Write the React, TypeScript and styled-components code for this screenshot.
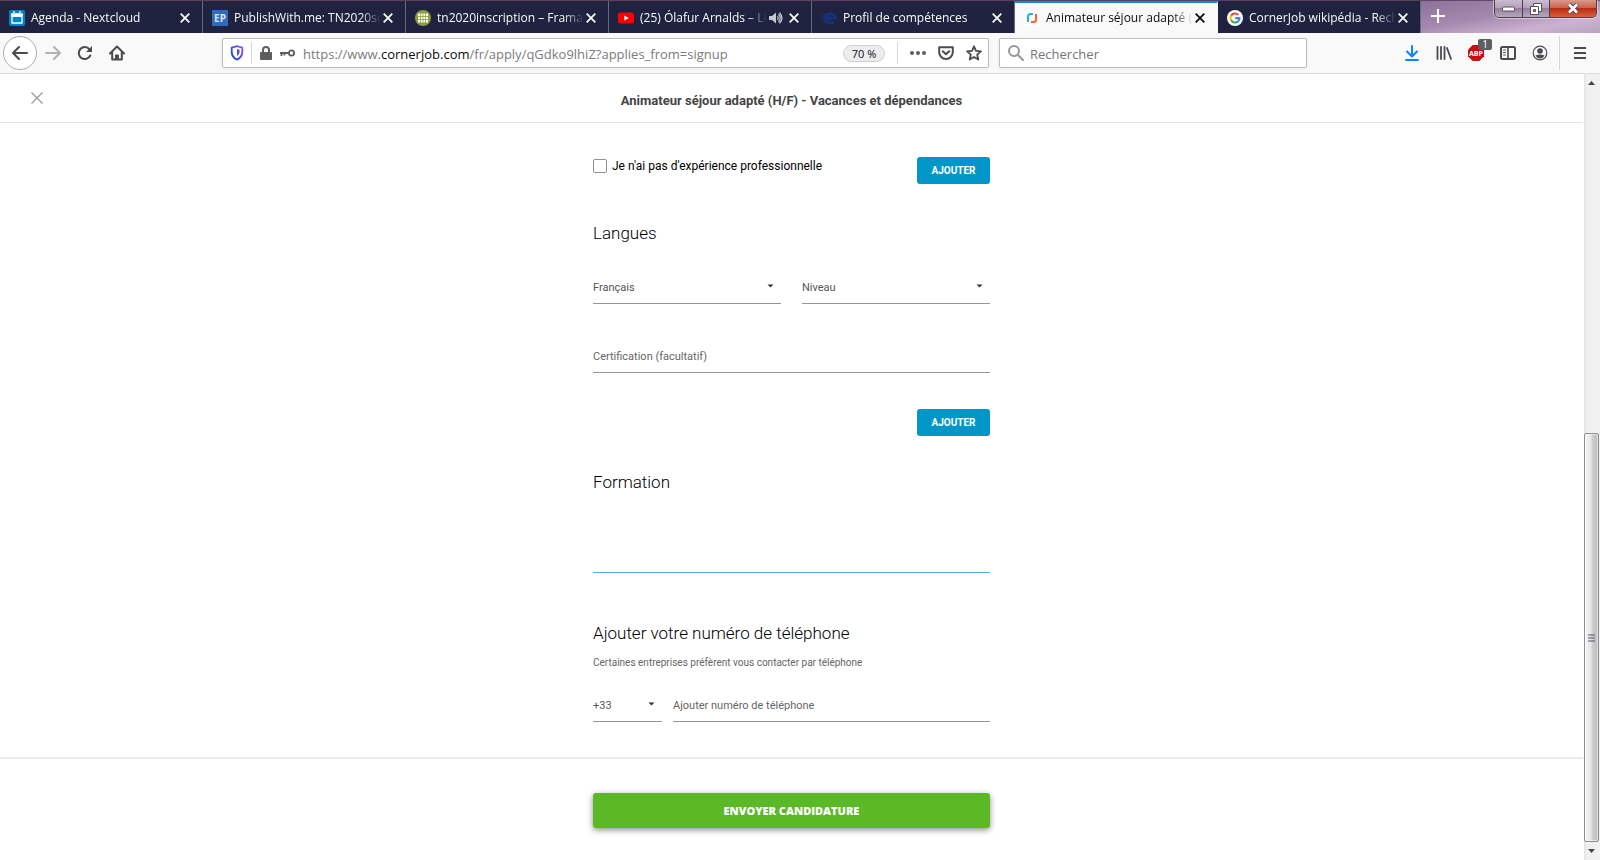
import React from 'react';
import styled, { createGlobalStyle, css } from 'styled-components';

const uiFont = '"Open Sans", "Noto Sans", sans-serif';
const pageFont = 'Roboto, "Liberation Sans", sans-serif';

const GlobalStyle = createGlobalStyle`
  *, *::before, *::after { box-sizing: border-box; }
  body { margin: 0; background: #fff; font-family: ${pageFont}; color: #000; }
  button, input, select { font: inherit; color: inherit; border: 0; margin: 0; padding: 0; background: none; border-radius: 0; }
  button { cursor: pointer; }
  h1, h2, p { margin: 0; }
  svg { display: block; flex: none; }
`;

const Window = styled.div`
  min-height: 100vh;
  display: flex;
  flex-direction: column;
`;

/* ---------- tab strip ---------- */

const TabStrip = styled.div`
  display: flex;
  height: 33px;
  padding-top: 1px;
  font: 12px/16px ${uiFont};
  background: linear-gradient(180deg, rgba(60, 35, 60, 0.55) 0, rgba(60, 35, 60, 0.55) 1px, transparent 1px),
    linear-gradient(170deg, #8d7098 0%, #a58aae 45%, #cbb3d0 75%, #b9a3bf 100%);
  background-size: 100% 100%, 179px 100%;
  background-position: 0 0, right top;
  background-repeat: no-repeat;
  background-color: #80647f;
`;

const Tab = styled.div<{ $active?: boolean }>`
  flex: 0 1 203px;
  min-width: 0;
  display: flex;
  align-items: center;
  gap: 6px;
  padding: 2px 12px 0 9px;
  border-right: 1px solid #68687e;
  background: #202340;
  color: #f9f9fa;
  ${p =>
    p.$active &&
    css`
      padding-top: 0;
      border-top: 2px solid #0a84ff;
      border-right-color: #f9f9fa;
      background: #f9f9fa;
      color: #0c0c0d;
    `}
`;

const TabLabel = styled.span`
  flex: 1;
  min-width: 0;
  margin-right: -4px;
  overflow: hidden;
  white-space: nowrap;
  mask-image: linear-gradient(to left, transparent 0, #000 20px);
`;

const TabClose = styled.button`
  display: flex;
  flex: none;
`;

const NewTab = styled.button`
  display: flex;
  padding: 8px 10px;
  color: #fff;
`;

const WindowControls = styled.div`
  display: flex;
  align-self: flex-start;
  height: 18px;
  margin: -1px 3px 0 auto;
  border: 1px solid #4b3e50;
  border-top: 0;
  border-radius: 0 0 5px 5px;
  overflow: hidden;
  box-shadow: 0 0 0 1px rgba(255, 255, 255, 0.45);
`;

const ControlButton = styled.button<{ $close?: boolean }>`
  width: ${p => (p.$close ? 47 : 27)}px;
  display: flex;
  align-items: center;
  justify-content: center;
  background: ${p =>
    p.$close
      ? 'linear-gradient(180deg, #d99a8b 0, #c9644f 45%, #bb2c12 50%, #d5613f 100%)'
      : 'linear-gradient(180deg, #cbbccf 0, #b5a2ba 45%, #957f9c 50%, #b9a7be 100%)'};
  & + & {
    border-left: 1px solid #4b3e50;
  }
`;

/* ---------- navigation toolbar ---------- */

const Toolbar = styled.div`
  height: 41px;
  display: flex;
  align-items: center;
  background: #f9f9fa;
  border-bottom: 1px solid #dcdcdd;
  color: #4a4a4f;
`;

const NavButtons = styled.div`
  display: flex;
  align-items: center;
  padding-left: 3px;
`;

const ToolButton = styled.button<{ $dim?: boolean }>`
  position: relative;
  width: 32px;
  height: 34px;
  display: flex;
  align-items: center;
  justify-content: center;
  opacity: ${p => (p.$dim ? 0.4 : 1)};
`;

const BackButton = styled(ToolButton)`
  width: 34px;
  border: 1px solid #adadb0;
  border-radius: 50%;
  background: #fff;
`;

const MenuButton = styled(ToolButton)`
  width: 40px;
`;

const Spacer = styled.div`
  flex: 89 1 0;
`;

const fieldBox = css`
  min-width: 0;
  height: 30px;
  display: flex;
  align-items: center;
  background: #fff;
  border: 1px solid #bcbcbe;
  border-radius: 2px;
  box-shadow: 0 1px 4px rgba(0, 0, 0, 0.06);
  font: 13px/18px ${uiFont};
`;

const AddressBar = styled.div`
  ${fieldBox}
  flex: 765 1 0;
  margin-right: 10px;
`;

const BoxButton = styled.button`
  width: 28px;
  height: 28px;
  display: flex;
  flex: none;
  align-items: center;
  justify-content: center;
`;

const Separator = styled.span`
  width: 1px;
  height: 22px;
  background: #d7d7db;
`;

const MenuSeparator = styled(Separator)`
  height: 34px;
  margin-left: 3px;
`;

const Address = styled.div`
  flex: 1;
  min-width: 0;
  overflow: hidden;
  white-space: nowrap;
  margin-left: 8px;
  padding-top: 2px;
  color: #7b7b7e;
  outline: 0;
  b {
    color: #0c0c0d;
    font-weight: 400;
  }
`;

const Zoom = styled.button`
  width: 42px;
  height: 17px;
  margin-right: 12px;
  border: 1px solid #cfcfd2;
  border-radius: 9px;
  background: #ededf0;
  color: #0c0c0d;
  font-size: 11px;
  line-height: 15px;
`;

const PageActions = styled.div`
  display: flex;
  padding-left: 6px;
`;

const SearchBox = styled.label`
  ${fieldBox}
  flex: 298 1 0;
  padding-left: 8px;
  gap: 6px;
  color: #97979a;
  input {
    flex: 1;
    min-width: 0;
    outline: 0;
    padding-top: 2px;
  }
  input::placeholder {
    color: #757578;
    opacity: 1;
  }
`;

const ToolGroup = styled.div`
  display: flex;
  align-items: center;
`;

const Badge = styled.span`
  position: absolute;
  top: 3px;
  right: 0;
  width: 14px;
  height: 11px;
  border-radius: 2px;
  background: #5e5e61;
  color: #fff;
  font: 10px/11px ${uiFont};
`;

/* ---------- page ---------- */

const Viewport = styled.div`
  flex: 1;
  display: flex;
`;

const Page = styled.div`
  flex: 1;
  min-width: 0;
`;

const PageHeader = styled.header`
  height: 49px;
  display: grid;
  grid-template-columns: 1fr auto 1fr;
  align-items: center;
  padding: 0 31px;
  border-bottom: 1px solid #e4e4e4;
`;

const Title = styled.h1`
  padding-top: 5px;
  font-size: 13px;
  line-height: 16px;
  font-weight: 700;
  color: #444;
`;

const CloseButton = styled.button`
  display: flex;
  justify-self: start;
`;

const Column = styled.div`
  width: 100%;
  max-width: 397px;
  margin: 0 auto;
`;

const FormBody = styled(Column)`
  padding: 34px 0 35px;
`;

const ActionRow = styled.div<{ $top?: number }>`
  display: flex;
  justify-content: flex-end;
  margin-top: ${p => p.$top ?? 0}px;
`;

const CheckLabel = styled.label`
  display: flex;
  align-items: center;
  gap: 5px;
  height: 18px;
  margin-right: auto;
  font-size: 12px;
  line-height: 18px;
`;

const CheckBox = styled.input`
  appearance: none;
  width: 14px;
  height: 14px;
  border: 1px solid #8f8f93;
  border-radius: 2px;
  background: #fff;
`;

const AddButton = styled.button`
  width: 73px;
  height: 27px;
  border-radius: 3px;
  background: #0097c8;
  color: #fff;
  font-size: 10px;
  font-weight: 700;
`;

const Heading = styled.h2<{ $top: number }>`
  margin-top: ${p => p.$top}px;
  font-size: 17px;
  line-height: 20px;
  font-weight: 300;
`;

const Hint = styled.p`
  margin-top: 13px;
  font-size: 10px;
  line-height: 14px;
  color: #666;
`;

const FieldRow = styled.div<{ $cols: string; $gap?: number; $top: number }>`
  display: grid;
  grid-template-columns: ${p => p.$cols};
  column-gap: ${p => p.$gap ?? 0}px;
  margin-top: ${p => p.$top}px;
`;

const lineField = css`
  width: 100%;
  height: 28px;
  padding-bottom: 5px;
  border-bottom: 1px solid #949494;
  outline: 0;
  font-size: 11px;
  color: #555;
`;

const TextField = styled.input<{ $focused?: boolean }>`
  ${lineField}
  padding-bottom: 4px;
  ${p => p.$focused && 'border-bottom-color: #5fa8e0;'}
  &::placeholder {
    color: #666;
    opacity: 1;
  }
`;

const SelectField = styled.select`
  ${lineField}
  appearance: none;
`;

const SelectWrap = styled.div`
  display: grid;
  align-items: center;
  & > * {
    grid-area: 1 / 1;
  }
  svg {
    justify-self: end;
    margin: 0 7px 8px 0;
    pointer-events: none;
  }
`;

const Submit = styled.footer`
  padding: 34px 0 32px;
  border-top: 2px solid #ebebeb;
`;

const SubmitButton = styled.button`
  width: 100%;
  height: 35px;
  border-radius: 3px;
  background: #5cb926;
  color: #fff;
  font: 800 11px/16px ${uiFont};
  box-shadow: 0 2px 6px rgba(0, 0, 0, 0.45);
`;

/* ---------- scroll bar ---------- */

const ScrollBar = styled.div`
  width: 17px;
  display: flex;
  flex-direction: column;
  padding-right: 1px;
  background: linear-gradient(90deg, #fff 1px, #e3e3e3 1px, #f0f0f0 4px, #f1f1f1);
`;

const ScrollArrow = styled.button`
  height: 18px;
  display: flex;
  align-items: center;
  justify-content: center;
`;

const ScrollTrack = styled.div`
  flex: 342 1 0;
`;

const ScrollThumb = styled.div`
  flex: 408 1 0;
  display: flex;
  align-items: center;
  justify-content: center;
  margin-left: 1px;
  border: 1px solid #8e8e90;
  border-radius: 2px;
  background: linear-gradient(90deg, #f5f5f5 0, #e6e6e7 45%, #cfcfd2 55%, #bcbcc0 100%);
  box-shadow: inset 0 0 0 1px rgba(255, 255, 255, 0.5);
`;

/* ---------- icons ---------- */

const Cross = () => (
  <svg width="10" height="10" viewBox="0 0 10 10" fill="none" stroke="currentColor" strokeWidth="1.800">
    <path d="M.7.7l8.600 8.600M9.300.7L.7 9.300" />
  </svg>
);

const Icon = ({ children }: { children: React.ReactNode }) => (
  <svg width="16" height="16" viewBox="0 0 16 16" fill="none" stroke="currentColor" strokeWidth="2" strokeLinecap="round" strokeLinejoin="round">
    {children}
  </svg>
);

const Caret = () => (
  <svg width="7" height="4" viewBox="0 0 7 4">
    <path d="M.5.5h6L3.500 3.500z" fill="#333" />
  </svg>
);

const CalendarIcon = () => (
  <Icon>
    <rect width="16" height="16" rx="2" fill="#0082c9" stroke="none" />
    <path d="M3 4h10v9H3z" fill="none" stroke="#fff" strokeWidth="1.300" />
    <path d="M3 4h10v2.500H3z" fill="#fff" stroke="#fff" strokeWidth="1" />
    <path d="M5 2v2.500M11 2v2.500" stroke="#fff" strokeWidth="2" />
    <path d="M5 1.800v2M11 1.800v2" stroke="#0082c9" strokeWidth=".6" />
  </Icon>
);

const EtherpadIcon = () => (
  <svg width="16" height="16" viewBox="0 0 16 16">
    <rect width="16" height="16" fill="#3069bd" />
    <text x="8" y="12" textAnchor="middle" fontFamily="Open Sans" fontWeight="700" fontSize="10" fill="#dbe7f8">EP</text>
  </svg>
);

const CalcIcon = () => (
  <Icon>
    <circle cx="8" cy="8" r="8" fill="#8e9c3c" stroke="none" />
    <path d="M3 3.500h10v9H3z" fill="#fff" stroke="none" />
    <path d="M3 6.500h10M3 9.500h10M5.500 3.500v9M8 3.500v9M10.500 3.500v9" stroke="#8e9c3c" strokeWidth=".8" />
  </Icon>
);

const YoutubeIcon = () => (
  <Icon>
    <rect x="0" y="2.500" width="16" height="11" rx="2.500" fill="#f00" stroke="none" />
    <path d="M6.300 5.500v5L10.800 8z" fill="#fff" stroke="none" />
  </Icon>
);

const SpeakerIcon = () => (
  <svg width="14" height="12" viewBox="0 0 14 12" fill="none" stroke="#c9c9d2" strokeWidth="1.200">
    <path d="M0 4h3l4-3.500v11L3 8H0z" fill="#c9c9d2" stroke="none" />
    <path d="M8.500 4q1.500 2 0 4M9.500 2q3.500 4 0 8M10.500.6q5 5.400 0 10.800" />
  </svg>
);

const EuropassIcon = () => (
  <Icon>
    <circle cx="5.500" cy="8" r="5.500" fill="#1d2a5c" stroke="none" />
    <path d="M5.800 8.300h8.700A4.700 4.700 0 1 0 13 11.800" stroke="#1b2f80" strokeWidth="2.400" strokeLinecap="butt" />
  </Icon>
);

const CornerJobIcon = () => (
  <Icon>
    <rect width="16" height="16" fill="#fff" stroke="none" />
    <path d="M4 12V6.500Q4 4 6.500 4H9" stroke="#21b3d6" strokeLinecap="butt" />
    <path d="M12 4v5.500Q12 12 9.500 12H7" stroke="#f8602c" strokeLinecap="butt" />
  </Icon>
);

const GoogleIcon = () => (
  <svg width="16" height="16" viewBox="0 0 16 16" fill="none" strokeWidth="2.100">
    <circle cx="8" cy="8" r="8" fill="#fff" />
    <path d="M11.300 4.900A4.500 4.500 0 0 0 4.100 5.800" stroke="#ea4335" />
    <path d="M4.100 5.800a4.500 4.500 0 0 0 0 4.500" stroke="#fbbc05" />
    <path d="M4.100 10.300a4.500 4.500 0 0 0 6.900 1.100" stroke="#34a853" />
    <path d="M11 11.400A4.500 4.500 0 0 0 12.500 8.100H8.200" stroke="#4285f4" />
  </svg>
);

const tabs: { label: string; icon: React.ReactNode; active?: boolean; sound?: boolean }[] = [
  { label: 'Agenda - Nextcloud', icon: <CalendarIcon /> },
  { label: 'PublishWith.me: TN2020so', icon: <EtherpadIcon /> },
  { label: 'tn2020inscription – Framac', icon: <CalcIcon /> },
  { label: '(25) Ólafur Arnalds – Liv', icon: <YoutubeIcon />, sound: true },
  { label: 'Profil de compétences', icon: <EuropassIcon /> },
  { label: 'Animateur séjour adapté (H', icon: <CornerJobIcon />, active: true },
  { label: 'CornerJob wikipédia - Rech', icon: <GoogleIcon /> },
];

function Tabs() {
  return (
    <TabStrip>
      {tabs.map(t => (
        <Tab key={t.label} $active={t.active}>
          {t.icon}
          <TabLabel>{t.label}</TabLabel>
          {t.sound && <SpeakerIcon />}
          <TabClose aria-label="Fermer l'onglet"><Cross /></TabClose>
        </Tab>
      ))}
      <NewTab aria-label="Nouvel onglet">
        <svg width="14" height="14" viewBox="0 0 14 14" stroke="currentColor" strokeWidth="2"><path d="M7 0v14M0 7h14" /></svg>
      </NewTab>
      <WindowControls>
        <ControlButton aria-label="Réduire">
          <svg width="13" height="6" viewBox="0 0 13 6"><rect x=".5" y="1" width="12" height="4" rx="1" fill="#fff" stroke="#55505c" /></svg>
        </ControlButton>
        <ControlButton aria-label="Restaurer">
          <svg width="13" height="12" viewBox="0 0 13 12" fill="#fff" stroke="#55505c">
            <path d="M3.500.5h8v8h-8z" />
            <path d="M.5 3.500h8v8h-8z" />
            <path d="M3.500 6.500h2v2h-2z" fill="#9a86a1" />
          </svg>
        </ControlButton>
        <ControlButton $close aria-label="Fermer">
          <svg width="12" height="11" viewBox="0 0 12 11" fill="none">
            <path d="M2 1.500l8 8M10 1.500l-8 8" stroke="#4d4652" strokeWidth="4.500" />
            <path d="M2 1.500l8 8M10 1.500l-8 8" stroke="#fff" strokeWidth="2.600" />
          </svg>
        </ControlButton>
      </WindowControls>
    </TabStrip>
  );
}

function NavBar() {
  return (
    <Toolbar>
      <NavButtons>
        <BackButton aria-label="Précédent"><Icon><path d="M15 8H1.500M7 2L1 8l6 6" /></Icon></BackButton>
        <ToolButton $dim aria-label="Suivant"><Icon><path d="M1 8h13.500M9 2l6 6-6 6" /></Icon></ToolButton>
        <ToolButton aria-label="Actualiser">
          <Icon><path d="M13.300 10.500A6 6 0 1 1 12.500 4.300" /><path d="M15 1v6H9z" fill="currentColor" stroke="none" /></Icon>
        </ToolButton>
        <ToolButton aria-label="Accueil">
          <Icon><path d="M1 8.500L8 1.500l7 7M3.200 7.500V14.500h9.600V7.500" /><path d="M6.500 14v-4h3v4z" fill="currentColor" stroke="currentColor" strokeWidth="1" /></Icon>
        </ToolButton>
      </NavButtons>
      <Spacer />
      <AddressBar>
        <BoxButton aria-label="Protection">
          <svg width="14" height="16" viewBox="0 0 14 16" fill="none">
            <defs><linearGradient id="shield" x1="1" y1="0" x2="0" y2="1"><stop stopColor="#9059ff" /><stop offset="1" stopColor="#0250bb" /></linearGradient></defs>
            <path d="M7 1.200l5.300 1.500v4Q12.300 12 7 14.600 1.700 12 1.700 6.700v-4z" stroke="url(#shield)" strokeWidth="1.900" strokeLinejoin="round" />
            <path d="M7 4l2.500.8v2.500Q9.300 9.600 7 11.200z" fill="#5b4be8" />
          </svg>
        </BoxButton>
        <Separator />
        <BoxButton aria-label="Connexion sécurisée">
          <svg width="12" height="14" viewBox="0 0 12 14" fill="none" stroke="#5e5e61" strokeWidth="2">
            <path d="M3 7V4a3 3 0 0 1 6 0v3" /><rect y="6" width="12" height="8" rx="1" fill="#5e5e61" stroke="none" />
          </svg>
        </BoxButton>
        <svg width="15" height="8" viewBox="0 0 15 8" fill="none" stroke="#5e5e61" strokeWidth="1.800">
          <circle cx="11.500" cy="4" r="2.600" /><path d="M9 4H0M1.500 4v3M4.500 4v2.500" />
        </svg>
        <Address role="textbox" aria-label="Adresse" contentEditable suppressContentEditableWarning spellCheck={false}>
          https://www.<b>cornerjob.com</b>/fr/apply/qGdko9lhiZ?applies_from=signup
        </Address>
        <Zoom>70 %</Zoom>
        <Separator />
        <PageActions>
          <BoxButton aria-label="Actions">
            <svg width="16" height="4" viewBox="0 0 16 4" fill="#5e5e61"><circle cx="2" cy="2" r="2" /><circle cx="8" cy="2" r="2" /><circle cx="14" cy="2" r="2" /></svg>
          </BoxButton>
          <BoxButton aria-label="Pocket"><Icon><path d="M1.200 2.200h13.600v5a6.800 6.800 0 0 1-13.600 0zM4.800 6.200L8 9.200l3.200-3" /></Icon></BoxButton>
          <BoxButton aria-label="Marque-page"><Icon><path d="M8 1.300l2 4.500 4.900.5-3.700 3.300 1.100 4.900L8 12l-4.300 2.500 1.100-4.900L1.100 6.300 6 5.800z" strokeWidth="1.800" /></Icon></BoxButton>
        </PageActions>
      </AddressBar>
      <SearchBox>
        <Icon><circle cx="6" cy="6" r="5" /><path d="M10 10l5 5" /></Icon>
        <input aria-label="Rechercher" placeholder="Rechercher" />
      </SearchBox>
      <Spacer />
      <ToolGroup>
        <ToolButton aria-label="Téléchargements">
          <svg width="14" height="16" viewBox="0 0 14 16" fill="none" stroke="#0a84ff" strokeWidth="2" strokeLinecap="round" strokeLinejoin="round"><path d="M7 1v10M2 6.500l5 5 5-5M1 15h12" /></svg>
        </ToolButton>
        <ToolButton aria-label="Bibliothèque"><Icon><path d="M1.500 2v12M5 2v12M8.500 2v12M11 3l4 11" strokeWidth="1.800" /></Icon></ToolButton>
        <ToolButton aria-label="Adblock Plus">
          <svg width="16" height="16" viewBox="0 0 16 16">
            <path d="M4.700 0h6.600L16 4.700v6.600L11.300 16H4.700L0 11.300V4.700z" fill="#c70d0d" />
            <text x="8" y="11" textAnchor="middle" fontFamily="Open Sans" fontWeight="700" fontSize="7" fill="#fff">ABP</text>
          </svg>
          <Badge>1</Badge>
        </ToolButton>
        <ToolButton aria-label="Barres latérales">
          <Icon><rect x="1" y="2" width="14" height="12" rx="1.500" /><path d="M8 2v12" strokeWidth="1.600" /><path d="M3.500 5h2M3.500 7.500h2M3.500 10h2" strokeWidth="1" /></Icon>
        </ToolButton>
        <ToolButton aria-label="Compte">
          <Icon><circle cx="8" cy="8" r="6.800" strokeWidth="1.200" /><circle cx="8" cy="6" r="2.800" fill="currentColor" stroke="none" /><path d="M3.500 10.500q4.500-2 9 0Q11 13.500 8 13.500t-4.500-3z" fill="currentColor" stroke="none" /></Icon>
        </ToolButton>
        <MenuSeparator />
        <MenuButton aria-label="Menu">
          <svg width="12" height="12" viewBox="0 0 12 12" stroke="currentColor" strokeWidth="2"><path d="M0 1h12M0 6h12M0 11h12" /></svg>
        </MenuButton>
      </ToolGroup>
    </Toolbar>
  );
}

function Select({ label, options }: { label: string; options: string[] }) {
  return (
    <SelectWrap>
      <SelectField aria-label={label}>{options.map(o => <option key={o}>{o}</option>)}</SelectField>
      <Caret />
    </SelectWrap>
  );
}

function ApplicationForm() {
  return (
    <form>
      <FormBody>
        <ActionRow>
          <CheckLabel><CheckBox type="checkbox" />Je n'ai pas d'expérience professionnelle</CheckLabel>
          <AddButton type="button">AJOUTER</AddButton>
        </ActionRow>

        <Heading $top={39}>Langues</Heading>
        <FieldRow $cols="1fr 1fr" $gap={21} $top={33}>
          <Select label="Langue" options={['Français']} />
          <Select label="Niveau" options={['Niveau']} />
        </FieldRow>
        <FieldRow $cols="1fr" $top={41}>
          <TextField aria-label="Certification" placeholder="Certification (facultatif)" />
        </FieldRow>
        <ActionRow $top={36}><AddButton type="button">AJOUTER</AddButton></ActionRow>

        <Heading $top={36}>Formation</Heading>
        <FieldRow $cols="1fr" $top={53}>
          <TextField $focused aria-label="Formation" />
        </FieldRow>

        <Heading $top={50}>Ajouter votre numéro de téléphone</Heading>
        <Hint>Certaines entreprises préfèrent vous contacter par téléphone</Hint>
        <FieldRow $cols="69px 1fr" $gap={11} $top={24}>
          <Select label="Indicatif" options={['+33']} />
          <TextField type="tel" aria-label="Numéro de téléphone" placeholder="Ajouter numéro de téléphone" />
        </FieldRow>
      </FormBody>
      <Submit>
        <Column><SubmitButton type="submit">ENVOYER CANDIDATURE</SubmitButton></Column>
      </Submit>
    </form>
  );
}

export default function App() {
  return (
    <Window>
      <GlobalStyle />
      <Tabs />
      <NavBar />
      <Viewport>
        <Page>
          <PageHeader>
            <CloseButton aria-label="Fermer"><svg width="12" height="12" viewBox="0 0 12 12" stroke="#999" strokeWidth="1.300"><path d="M.5.5l11 11M11.500.5l-11 11" /></svg></CloseButton>
            <Title>Animateur séjour adapté (H/F) - Vacances et dépendances</Title>
          </PageHeader>
          <ApplicationForm />
        </Page>
        <ScrollBar>
          <ScrollArrow aria-label="Défiler vers le haut"><svg width="7" height="4" viewBox="0 0 7 4"><path d="M0 4l3.500-4L7 4z" fill="#444" /></svg></ScrollArrow>
          <ScrollTrack />
          <ScrollThumb><svg width="7" height="8" viewBox="0 0 7 8" stroke="#55555a" strokeWidth="1.200"><path d="M0 1h7M0 4h7M0 7h7" /></svg></ScrollThumb>
          <ScrollArrow aria-label="Défiler vers le bas"><svg width="7" height="4" viewBox="0 0 7 4"><path d="M0 0l3.500 4L7 0z" fill="#444" /></svg></ScrollArrow>
        </ScrollBar>
      </Viewport>
    </Window>
  );
}
